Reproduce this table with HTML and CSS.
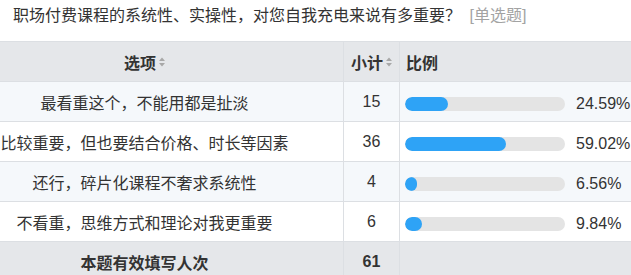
FILE: index.html
```html
<!DOCTYPE html>
<html lang="zh-CN">
<head>
<meta charset="utf-8">
<title>职场付费课程</title>
<link rel="stylesheet" href="styles.css">
</head>
<body>
<div class="title">职场付费课程的系统性、实操性，对您自我充电来说有多重要？ <span class="type">[单选题]</span></div>
<table class="stats">
  <thead>
    <tr>
      <th class="c-opt"><span class="th-in">选项<svg class="sort" viewBox="0 0 6 10" width="6" height="10"><polygon points="0,4 3,0.5 6,4"/><polygon points="0,6 3,9.5 6,6"/></svg></span></th>
      <th class="c-num"><span class="th-in">小计<svg class="sort" viewBox="0 0 6 10" width="6" height="10"><polygon points="0,4 3,0.5 6,4"/><polygon points="0,6 3,9.5 6,6"/></svg></span></th>
      <th class="c-pct">比例</th>
    </tr>
  </thead>
  <tbody>
    <tr class="alt">
      <td class="c-opt">最看重这个，不能用都是扯淡</td>
      <td class="c-num">15</td>
      <td class="c-pct"><div class="bar"><div class="track"><div class="fill" style="width:43px"></div></div><span class="pv">24.59%</span></div></td>
    </tr>
    <tr>
      <td class="c-opt">比较重要，但也要结合价格、时长等因素</td>
      <td class="c-num">36</td>
      <td class="c-pct"><div class="bar"><div class="track"><div class="fill" style="width:101px"></div></div><span class="pv">59.02%</span></div></td>
    </tr>
    <tr class="alt">
      <td class="c-opt">还行，碎片化课程不奢求系统性</td>
      <td class="c-num">4</td>
      <td class="c-pct"><div class="bar"><div class="track"><div class="fill" style="width:12px"></div></div><span class="pv">6.56%</span></div></td>
    </tr>
    <tr>
      <td class="c-opt">不看重，思维方式和理论对我更重要</td>
      <td class="c-num">6</td>
      <td class="c-pct"><div class="bar"><div class="track"><div class="fill" style="width:17px"></div></div><span class="pv">9.84%</span></div></td>
    </tr>
  </tbody>
  <tfoot>
    <tr>
      <td class="c-opt total">本题有效填写人次</td>
      <td class="c-num total">61</td>
      <td class="c-pct"></td>
    </tr>
  </tfoot>
</table>
</body>
</html>
```
FILE: styles.css
```css
html, body {
  margin: 0;
  padding: 0;
  background: #ffffff;
  overflow: hidden;
}
body {
  font-family: "Liberation Sans", "Noto Sans CJK SC", sans-serif;
  color: #333333;
  font-size: 16px;
}
.title {
  padding: 6px 0 0 13px;
  height: 35px;
  line-height: 20px;
  font-size: 16px;
  color: #333333;
  white-space: nowrap;
}
.type {
  color: #a3a3a3;
  margin-left: 4px;
}
.stats {
  border-collapse: collapse;
  table-layout: fixed;
  width: 631px;
}
.stats th,
.stats td {
  height: 39px;
  padding: 0;
  border: 1px solid #dcdfe3;
  font-size: 16px;
  white-space: nowrap;
}
.stats tr > :first-child {
  border-left: none;
}
.stats tr > :last-child {
  border-right: none;
}
.stats thead th {
  background: #e5e7ea;
  font-weight: bold;
  color: #333333;
}
.stats tbody tr {
  background: #ffffff;
}
.stats tbody tr.alt {
  background: #f5f8fb;
}
.stats tfoot td {
  background: #e5e7ea;
  height: 40px;
}
.c-opt {
  width: 289px;
  padding-right: 54px !important;
  text-align: center;
}
.c-num {
  width: 55px;
  text-align: center;
}
.c-pct {
  text-align: left;
  padding-left: 6px !important;
}
.th-in {
  display: inline-flex;
  align-items: center;
  gap: 3px;
}
.sort {
  fill: #a8a8a8;
  margin-top: 1px;
}
.total {
  font-weight: bold;
}
.bar {
  display: flex;
  align-items: center;
  gap: 11px;
  margin-left: -1px;
  padding-top: 4px;
}
.track {
  width: 160px;
  height: 14px;
  flex: none;
  border-radius: 7px;
  background: #e4e4e4;
  overflow: hidden;
}
.fill {
  height: 100%;
  border-radius: 7px;
  background: #2ea3f6;
}
.pv {
  color: #333333;
  font-size: 16px;
}
```
